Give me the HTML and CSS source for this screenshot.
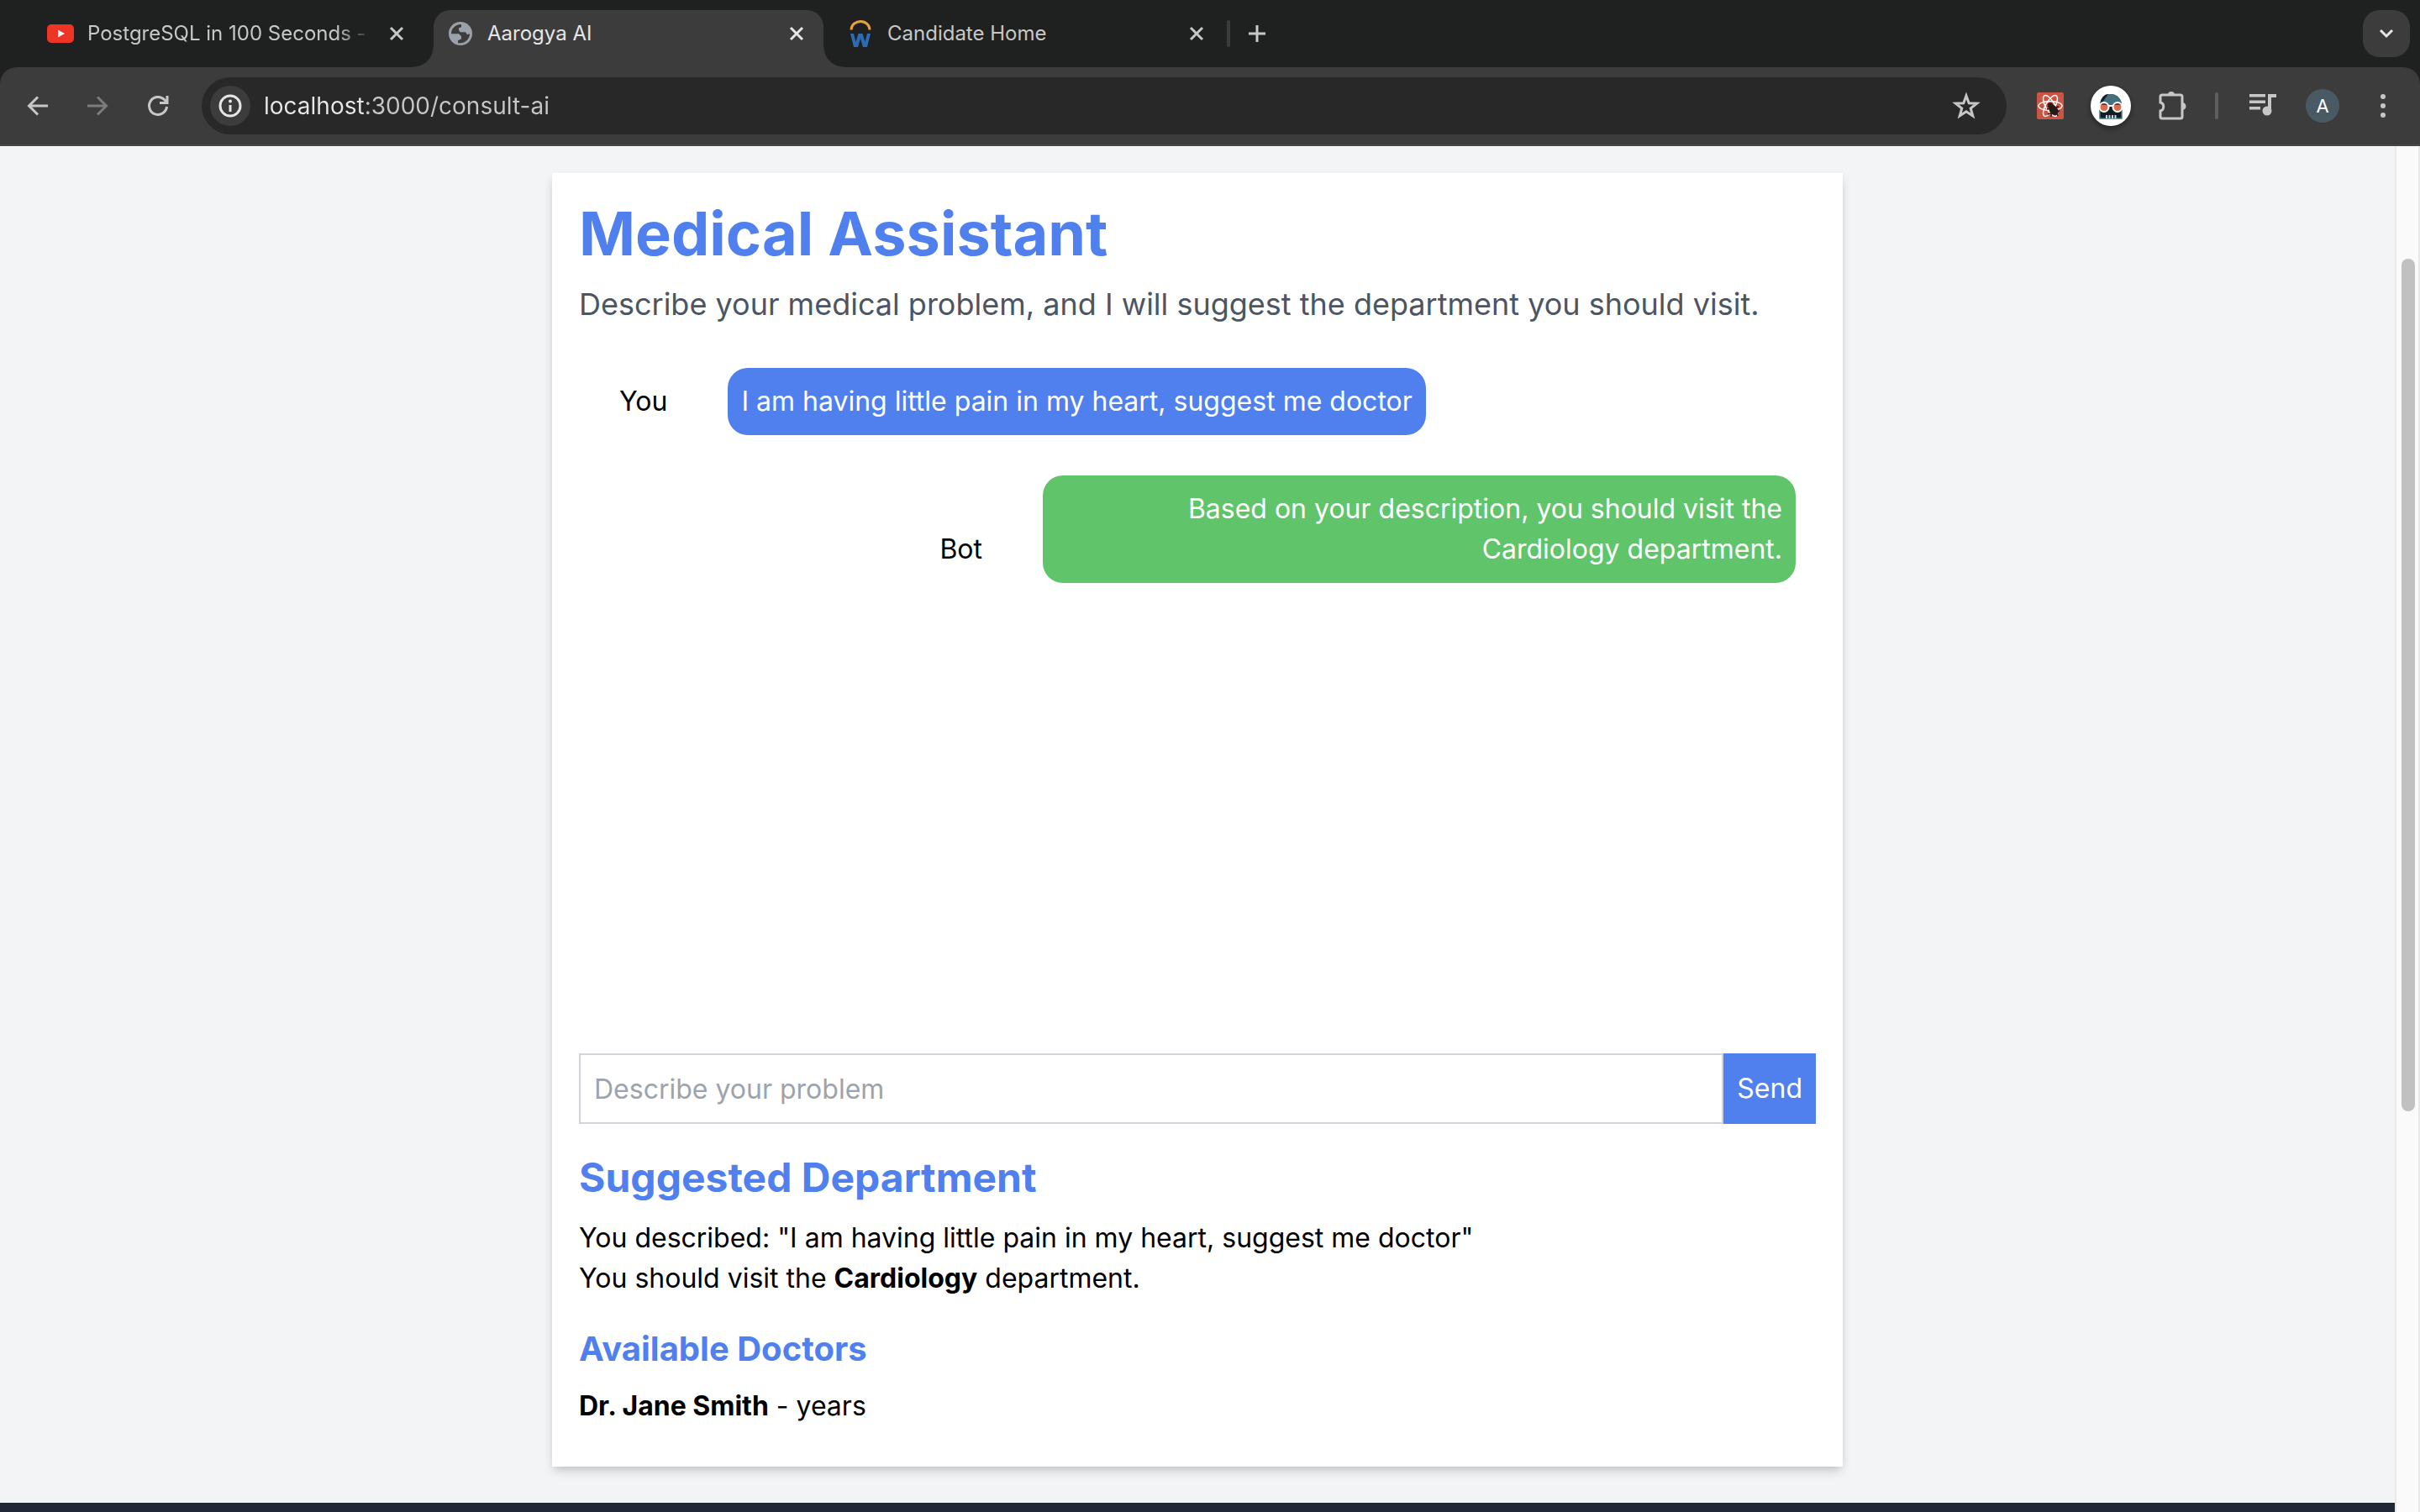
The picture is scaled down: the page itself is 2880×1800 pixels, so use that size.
FILE: index.html
```html
<!DOCTYPE html>
<html lang="en">
<head>
<meta charset="utf-8">
<title>Aarogya AI</title>
<link rel="stylesheet" href="styles.css">
</head>
<body>
<div class="browser">
  <header class="tab-strip">
    <div class="tab">
      <svg class="tab-icon" viewBox="0 0 32 32" aria-hidden="true"><rect y="5" width="32" height="22" rx="5" fill="#ee3424"/><path d="M13 11.500v9l8-4.500z" fill="#fff"/></svg>
      <span class="tab-title tab-title-faded">PostgreSQL in 100 Seconds -</span>
      <button class="tab-close" aria-label="Close tab"><svg viewBox="0 0 24 24"><path d="M5 5l14 14M19 5L5 19"/></svg></button>
    </div>
    <div class="tab tab-active">
      <svg class="tab-icon" viewBox="0 0 32 32" aria-hidden="true"><circle cx="16" cy="16" r="14" fill="#9aa1a8"/><path d="M5 16C5 10 10 5.500 16 5l1 .200v3l-3 1v3l2 2h6l2 3 3-1c0 6-5 11-11 11h-3v-3l4-2v-3l-3-3H5z" fill="#3c3c3c"/></svg>
      <span class="tab-title">Aarogya AI</span>
      <button class="tab-close" aria-label="Close tab"><svg viewBox="0 0 24 24"><path d="M5 5l14 14M19 5L5 19"/></svg></button>
    </div>
    <div class="tab">
      <svg class="tab-icon" viewBox="0 0 32 32" aria-hidden="true"><path d="M5 11.500a11 10 0 0 1 22 0" fill="none" stroke="#e8a13a" stroke-width="3"/><path d="M4 16h4l2.500 10L13.500 16h5l3 10L24 16h4l-4 16h-5l-3-10-3 10H8z" fill="#2d6cb5"/></svg>
      <span class="tab-title">Candidate Home</span>
      <button class="tab-close" aria-label="Close tab"><svg viewBox="0 0 24 24"><path d="M5 5l14 14M19 5L5 19"/></svg></button>
    </div>
    <span class="strip-divider"></span>
    <button class="new-tab" aria-label="New tab"><svg viewBox="0 0 24 24"><path d="M12 2v20M2 12h20"/></svg></button>
    <button class="tab-search" aria-label="Search tabs"><svg viewBox="0 0 24 24"><path d="M5 8l7 7 7-7"/></svg></button>
  </header>

  <nav class="toolbar" aria-label="Browser toolbar">
    <button class="tool" aria-label="Back"><svg class="line" viewBox="0 0 32 32"><path d="M29 16H7M17 5.500L6.500 16 17 26.500"/></svg></button>
    <button class="tool tool-disabled" aria-label="Forward"><svg class="line" viewBox="0 0 32 32"><path d="M4 16h22M16 5.500L26.500 16 16 26.500"/></svg></button>
    <button class="tool" aria-label="Reload"><svg class="line" viewBox="0 0 32 32"><path d="M26.500 17a10.500 10.500 0 1 1-3-8.500l3 3M27 4v8.500h-9"/></svg></button>
    <div class="address">
      <button class="site-info" aria-label="Site information"><svg viewBox="0 0 32 32"><circle cx="16" cy="16" r="12" fill="none" stroke="#e6e6e6" stroke-width="3"/><path d="M16 15v8" stroke="#e6e6e6" stroke-width="3"/><circle cx="16" cy="10.500" r="2" fill="#e6e6e6"/></svg></button>
      <input class="address-input" type="text" value="localhost:3000/consult-ai" aria-label="Address">
      <button class="tool" aria-label="Bookmark this tab"><svg class="star" viewBox="0 0 36 36"><path d="M18 6l3.200 8.800 9.400.4-7.400 5.800 2.600 9-7.800-5.200-7.800 5.200 2.600-9-7.400-5.800 9.400-.4z"/></svg></button>
    </div>
    <button class="tool" aria-label="React Developer Tools">
      <svg viewBox="0 0 32 32"><rect width="32" height="32" rx="2" fill="#cb5443"/><g fill="none" stroke="#fff" stroke-width="1.500"><ellipse cx="16" cy="16" rx="14" ry="5.500"/><ellipse cx="16" cy="16" rx="14" ry="5.500" transform="rotate(60 16 16)"/><ellipse cx="16" cy="16" rx="14" ry="5.500" transform="rotate(120 16 16)"/></g><g fill="#241c1b" stroke="#241c1b" stroke-width="1.500"><ellipse cx="20" cy="21" rx="4" ry="6" transform="rotate(-35 20 21)"/><circle cx="16" cy="15.500" r="2.500"/><path d="M12 20l14-3M13 26l14-4M17 29l1-13M25 28l-5-11"/></g></svg>
    </button>
    <button class="tool" aria-label="Extension">
      <svg class="badge-icon" viewBox="0 0 48 48"><circle cx="24" cy="24" r="24" fill="#fff"/><path d="M11 39V24a13 14 0 0 1 26 0v15z" fill="#151c22"/><path d="M11 23a13 13 0 0 1 26 0z" fill="#457080"/><path d="M12 18c2-5 5-8 9-8l-8 11z" fill="#151c22"/><path d="M11 27v12h26V27" fill="none" stroke="#457080" stroke-width="1.500"/><circle cx="16" cy="25.500" r="5.500" fill="#e06a4c" stroke="#fff" stroke-width="2"/><circle cx="32" cy="25.500" r="5.500" fill="#e06a4c" stroke="#fff" stroke-width="2"/><path d="M12 23a5 5 0 0 1 8 0zM28 23a5 5 0 0 1 8 0z" fill="#6a3b36"/><path d="M21 24h6" stroke="#fff" stroke-width="2"/><path d="M19 35v4M22.500 35v4M26 35v4M29.500 35v4" stroke="#b9dbe2" stroke-width="2"/></svg>
    </button>
    <button class="tool" aria-label="Extensions"><svg class="puzzle" viewBox="0 0 36 36"><path d="M5 7a2 2 0 0 1 2-2h22a2 2 0 0 1 2 2v24a2 2 0 0 1-2 2H7a2 2 0 0 1-2-2v-7c5-1 5-9 0-10z" fill="none" stroke="#c7c7c7" stroke-width="3"/><path d="M14 5a4 4 0 0 1 8 0zM31 14a4.500 4.500 0 0 1 0 9z" fill="#c7c7c7"/></svg></button>
    <span class="tool-divider"></span>
    <button class="tool" aria-label="Media controls"><svg viewBox="0 0 32 32"><path d="M1 2h19v3.500H1zM1 9.500h19v3.500H1zM1 17h13v3.500H1z" fill="#c7c7c7"/><path d="M23 2h10v4h-6v16h-4z" fill="#c7c7c7"/><circle cx="22" cy="22" r="5.500" fill="#c7c7c7"/></svg></button>
    <button class="tool" aria-label="Profile"><span class="avatar">A</span></button>
    <button class="tool" aria-label="Menu"><svg viewBox="0 0 32 32" fill="#c7c7c7"><circle cx="16" cy="5" r="3"/><circle cx="16" cy="16" r="3"/><circle cx="16" cy="27" r="3"/></svg></button>
  </nav>

  <div class="viewport">
    <div class="page">
      <main class="card">
        <h1 class="title">Medical Assistant</h1>
        <p class="lead">Describe your medical problem, and I will suggest the department you should visit.</p>
        <div class="chat">
          <div class="message">
            <span class="sender">You</span>
            <p class="bubble bubble-user">I am having little pain in my heart, suggest me doctor</p>
          </div>
          <div class="message message-bot">
            <span class="sender">Bot</span>
            <p class="bubble bubble-bot">Based on your description, you should visit the Cardiology department.</p>
          </div>
        </div>
        <form class="composer">
          <input class="composer-input" type="text" placeholder="Describe your problem" aria-label="Describe your problem">
          <button class="composer-send" type="button">Send</button>
        </form>
        <section class="section">
          <h2 class="heading">Suggested Department</h2>
          <p>You described: "I am having little pain in my heart, suggest me doctor"</p>
          <p>You should visit the <strong>Cardiology</strong> department.</p>
        </section>
        <section class="section">
          <h3 class="subheading">Available Doctors</h3>
          <ul class="doctors">
            <li><strong>Dr. Jane Smith</strong> - years</li>
          </ul>
        </section>
      </main>
      <footer class="footer"></footer>
    </div>
    <div class="scrollbar"><div class="scroll-thumb"></div></div>
  </div>
</div>
</body>
</html>
```
FILE: styles.css
```css
*, *::before, *::after { box-sizing: border-box; }

body, h1, h2, h3, p, ul { margin: 0; padding: 0; }

body {
  font-family: Inter, "Liberation Sans", sans-serif;
  font-size: 32px;
  line-height: 48px;
  color: #000;
  background: #f3f4f6;
}

button, input { font: inherit; color: inherit; border: 0; padding: 0; margin: 0; background: none; }
button { display: flex; align-items: center; justify-content: center; }
svg { display: block; overflow: visible; }

.browser { display: flex; flex-direction: column; height: 100vh; overflow: hidden; background: #1f2120; }

/* Tab strip */
.tab-strip { display: flex; align-items: center; gap: 12px; height: 80px; padding: 12px 12px 0 40px; flex: none; }
.tab {
  position: relative;
  display: flex;
  align-items: center;
  gap: 16px;
  width: 464px;
  height: 68px;
  padding: 0 20px 12px 16px;
  font-size: 24px;
  line-height: 32px;
  color: #c7c7c7;
}
.tab-icon { width: 32px; height: 32px; flex: none; }
.tab-title { flex: 1; min-width: 0; white-space: nowrap; }
.tab-title-faded { -webkit-mask-image: linear-gradient(to right, #000 296px, transparent 340px); mask-image: linear-gradient(to right, #000 296px, transparent 340px); }
.tab-close svg { width: 24px; height: 24px; }
.tab-close svg, .new-tab svg, .tab-search svg { fill: none; stroke: currentColor; stroke-width: 3; }
.tab-active { background: #3c3c3c; border-radius: 20px 20px 0 0; color: #e6e6e6; }
.tab-active::before, .tab-active::after { content: ""; position: absolute; bottom: 0; width: 24px; height: 24px; }
.tab-active::before { right: 100%; background: radial-gradient(circle at 0 0, transparent 23px, #3c3c3c 24px); }
.tab-active::after { left: 100%; background: radial-gradient(circle at 100% 0, transparent 23px, #3c3c3c 24px); }
.strip-divider { width: 4px; height: 32px; margin: 0 8px 12px -8px; border-radius: 2px; background: #3c3c3c; }
.new-tab { width: 24px; margin-bottom: 12px; color: #c7c7c7; }
.new-tab svg { width: 24px; height: 24px; }
.tab-search { width: 56px; height: 56px; margin: 0 0 12px auto; border-radius: 20px; background: #3c3c3c; color: #e6e6e6; }
.tab-search svg { width: 24px; height: 24px; }

/* Toolbar */
.toolbar {
  display: flex;
  align-items: center;
  gap: 16px;
  flex: none;
  height: 94px;
  padding: 0 16px;
  background: #3c3c3c;
  border-bottom: 2px solid #474747;
  border-radius: 20px 20px 0 0;
}
.tool { width: 56px; height: 56px; flex: none; color: #c7c7c7; }
.tool svg { width: 32px; height: 32px; }
.tool .line { fill: none; stroke: currentColor; stroke-width: 3; }
.tool .star { width: 36px; height: 36px; fill: none; stroke: currentColor; stroke-width: 3; }
.tool .puzzle { width: 36px; height: 36px; }
.tool .badge-icon { width: 48px; height: 48px; border-radius: 50%; box-shadow: 0 3px 6px rgba(0, 0, 0, .4); }
.tool-disabled { color: #7c7c7c; }
.address {
  display: flex;
  align-items: center;
  gap: 16px;
  flex: 1;
  min-width: 0;
  height: 68px;
  margin: 0 8px;
  padding: 0 20px 0 10px;
  border-radius: 34px;
  background: #282828;
}
.site-info { width: 48px; height: 48px; flex: none; border-radius: 50%; background: #3c3c3c; }
.site-info svg { width: 32px; height: 32px; }
/* The host part of the URL is brighter than the port and path */
.address-input {
  flex: 1;
  min-width: 0;
  height: 48px;
  font-size: 28px;
  color: transparent;
  background: linear-gradient(to right, #e8e8e8 122px, #c7c7c7 122px);
  -webkit-background-clip: text;
  background-clip: text;
}
.tool-divider { width: 4px; height: 32px; margin: 0 8px; border-radius: 2px; background: #5e5e5e; }
.avatar { width: 40px; height: 40px; border-radius: 50%; background: #4a5a65; color: #fff; font-size: 22px; line-height: 40px; text-align: center; }

/* Page area */
.viewport { display: flex; flex: 1; min-height: 0; }
.page { display: flex; flex-direction: column; flex: 1; min-width: 0; padding-top: 32px; background: #f3f4f6; }
.card {
  width: 100%;
  max-width: 1536px;
  margin: 0 auto 43px;
  padding: 32px;
  background: #fff;
  box-shadow: 0 8px 12px -2px rgba(0, 0, 0, .1), 0 4px 8px -4px rgba(0, 0, 0, .1), 0 4px 12px rgba(0, 0, 0, .06);
}
.title { margin-bottom: 16px; font-size: 72px; line-height: 80px; font-weight: 700; color: #4f80ee; }
.lead { margin-bottom: 32px; font-size: 36px; line-height: 56px; color: #4b5563; }
.chat { height: 800px; margin-bottom: 32px; overflow-y: auto; }
.message { display: flex; align-items: last baseline; gap: 72px; padding: 16px 24px 32px 48px; }
.message-bot { justify-content: flex-end; }
.bubble { max-width: 896px; padding: 16px; border-radius: 24px; color: #fff; }
.bubble-user { background: #4f80ee; }
.bubble-bot { background: #5fc46a; text-align: right; }
.composer { display: flex; }
.composer-input { flex: 1; min-width: 0; height: 84px; padding: 16px; border: 2px solid #d1d5db; }
.composer-input::placeholder { color: #9ca3af; opacity: 1; }
.composer-send { padding: 16px; background: #4f80ee; color: #fff; }
.section { margin-top: 32px; }
.heading { margin-bottom: 16px; font-size: 48px; line-height: 64px; font-weight: 700; color: #4f80ee; }
.subheading { margin-bottom: 16px; font-size: 40px; line-height: 56px; font-weight: 700; color: #4f80ee; }
.doctors { list-style: none; }
.doctors li { margin-bottom: 16px; }
.footer { flex: 1; background: #202838; }

.scrollbar { width: 30px; flex: none; padding: 134px 4px 0 6px; background: #fafafa; border: solid #e8e8e8; border-width: 0 2px; }
.scroll-thumb { width: 16px; height: 68%; border-radius: 8px; background: #c1c1c1; }
```
